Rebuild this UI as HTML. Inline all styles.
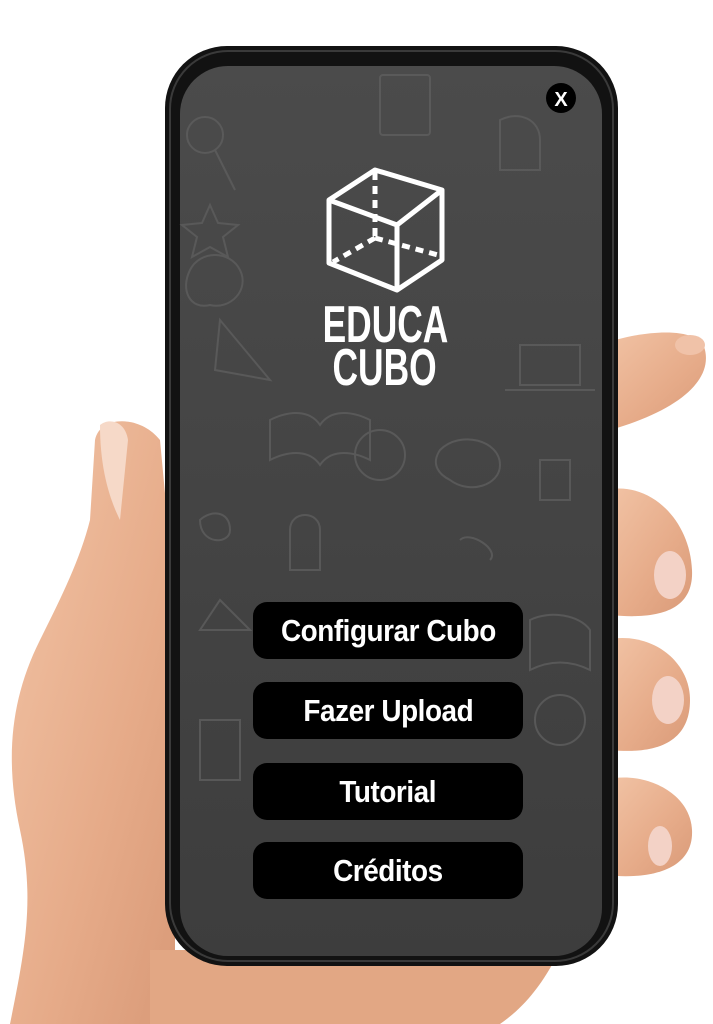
<!DOCTYPE html>
<html><head><meta charset="utf-8"><style>
html,body{margin:0;padding:0;background:#fff;width:713px;height:1024px;overflow:hidden;position:relative;font-family:"Liberation Sans",sans-serif}
svg{position:absolute;left:0;top:0}
.btn{position:absolute;left:253px;width:270px;height:57px;background:#000;border-radius:14px;color:#fff;font-weight:bold;font-size:31px;line-height:57px;text-align:center}
.btn span{display:inline-block;transform:scaleX(0.9);white-space:nowrap;letter-spacing:-0.5px}
.logo{position:absolute;left:285px;width:200px;text-align:center;color:#fff;font-weight:bold;font-size:52px;line-height:44px}
.logo span{display:inline-block;transform:scaleX(0.68)}
</style></head><body>
<svg width="713" height="1024" viewBox="0 0 713 1024">
<defs>
<linearGradient id="sk" x1="0" y1="0" x2="1" y2="1"><stop offset="0" stop-color="#f2c4a6"/><stop offset="0.6" stop-color="#e6ab89"/><stop offset="1" stop-color="#d99a78"/></linearGradient>
<linearGradient id="scr" x1="0" y1="0" x2="0" y2="1"><stop offset="0" stop-color="#4b4b4b"/><stop offset="1" stop-color="#3d3d3d"/></linearGradient>
</defs>
<path d="M95 440 C100 415 140 415 160 440 L175 600 L175 1024 L10 1024 C25 950 35 900 20 830 C5 760 10 700 40 640 C60 600 80 560 90 520 Z" fill="url(#sk)"/>
<path d="M150 950 L560 950 C540 990 520 1010 500 1024 L150 1024 Z" fill="#e2a784"/>
<path d="M100 425 C108 418 125 420 128 440 L120 520 C110 500 100 470 100 425 Z" fill="#f6d9c8"/>
<path d="M600 345 C640 330 700 325 705 350 C712 380 680 410 610 430 Z" fill="url(#sk)"/>
<path d="M605 490 C650 480 690 520 692 570 C694 610 660 620 610 615 Z" fill="url(#sk)"/>
<path d="M605 640 C650 630 690 660 690 700 C690 740 660 755 610 750 Z" fill="url(#sk)"/>
<path d="M605 780 C640 770 690 790 692 830 C694 870 650 880 605 875 Z" fill="url(#sk)"/>
<ellipse cx="670" cy="575" rx="16" ry="24" fill="#f3d2c6"/>
<ellipse cx="668" cy="700" rx="16" ry="24" fill="#f3d2c6"/>
<ellipse cx="660" cy="846" rx="12" ry="20" fill="#f3d2c6"/>
<ellipse cx="690" cy="345" rx="15" ry="10" fill="#f0c2a8"/>
<rect x="165" y="46" width="453" height="920" rx="62" fill="#121212"/>
<rect x="170" y="51" width="443" height="910" rx="58" fill="none" stroke="#3a3a3a" stroke-width="2"/>
<rect x="180" y="66" width="422" height="890" rx="48" fill="url(#scr)"/>
<g fill="none" stroke="#5e5e5e" stroke-width="2" opacity="0.8">
<circle cx="205" cy="135" r="18"/><path d="M215 150 L235 190"/>
<path d="M210 205 l8 18 20 2 -15 12 5 20 -18-10 -18 10 5-20 -15-12 20-2z"/>
<path d="M190 270 c10-20 40-20 50 0 c10 20-10 40-30 35 c-20 5-30-15-20-35z"/>
<path d="M220 320 L270 380 L215 370 Z"/>
<rect x="380" y="75" width="50" height="60" rx="3"/>
<path d="M500 120 c20-10 40 0 40 20 v30 h-40z"/>
<path d="M520 345 h60 v40 h-60z M505 390 h90"/>
<path d="M270 420 c20-10 40-10 50 5 c10-15 30-15 50-5 v40 c-20-10-40-10-50 5 c-10-15-30-15-50-5z"/>
<path d="M440 450 c20-20 60-10 60 15 c0 20-30 30-50 15 c-10-5-20-15-10-30z"/>
<circle cx="380" cy="455" r="25"/>
<path d="M290 530 c0-20 30-20 30 0 v40 h-30z"/>
<path d="M200 520 c10-10 30-10 30 10 c0 15-30 15-30-10z"/>
<path d="M530 620 c20-10 50-5 60 10 v40 c-20-10-40-10-60 0z"/>
<path d="M200 630 l20-30 30 30z"/>
<circle cx="560" cy="720" r="25"/>
<path d="M200 720 h40 v60 h-40z"/>
<path d="M540 460 h30 v40 h-30z"/>
<path d="M460 540 c10-10 40 10 30 20"/>
</g>
<g fill="none" stroke="#fff" stroke-width="5" stroke-linejoin="round">
<path d="M329 200 L375 170 L442 190 L442 260 L397 290 L329 263 Z"/>
<path d="M329 200 L397 225 L442 190 M397 225 L397 290"/>
</g>
<g fill="none" stroke="#fff" stroke-width="5" stroke-dasharray="8 6">
<path d="M375 172 L375 238 M375 238 L333 262 M375 238 L438 255"/>
</g>
<circle cx="561" cy="98" r="15" fill="#000"/>
<text x="561" y="106" fill="#fff" font-family="Liberation Sans" font-weight="bold" font-size="20" text-anchor="middle">X</text>
</svg>
<div class="logo" style="top:303px"><span>EDUCA</span></div>
<div class="logo" style="top:346px"><span>CUBO</span></div>
<div class="btn" style="top:602px"><span>Configurar Cubo</span></div>
<div class="btn" style="top:682px"><span>Fazer Upload</span></div>
<div class="btn" style="top:763px"><span>Tutorial</span></div>
<div class="btn" style="top:842px"><span>Créditos</span></div>
</body></html>
